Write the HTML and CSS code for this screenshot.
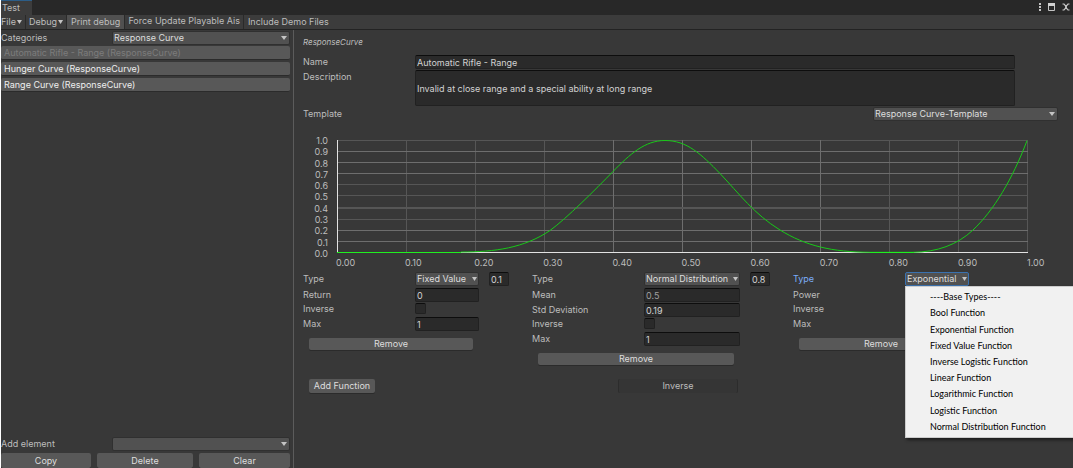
FILE: index.html
```html
<!DOCTYPE html>
<html lang="en">
<head>
<meta charset="utf-8">
<title>Test</title>
<link rel="stylesheet" href="styles.css">
</head>
<body>
<div class="app">
  <header class="titlebar">
    <div class="tab">Test</div>
    <div class="window-actions">
      <button class="icon-button" aria-label="Menu"><svg width="4" height="8" viewBox="0 0 4 8"><path d="M1 0h2v2H1zM1 3h2v2H1zM1 6h2v2H1z" fill="#c4c4c4"/></svg></button>
      <button class="icon-button" aria-label="Maximize"><svg width="8" height="8" viewBox="0 0 8 8"><path d="M.5 .5h6v7h-6z" fill="none" stroke="#c4c4c4"/><path d="M0 0h7v3H0z" fill="#d0d0d0"/></svg></button>
      <button class="icon-button" aria-label="Close"><svg width="8" height="8" viewBox="0 0 8 8"><path d="M.5 1h1.500L4 3.300 6 1h1.500M.5 7h1.500L4 4.700 6 7h1.500M3 4h2" fill="none" stroke="#c8c8c8" stroke-width="1.200"/></svg></button>
    </div>
  </header>
  <nav class="toolbar">
    <button class="tool tool-first">File<span class="caret"></span></button>
    <button class="tool">Debug<span class="caret"></span></button>
    <button class="tool tool-active">Print debug</button>
    <button class="tool tool-raised">Force Update Playable Ais</button>
    <button class="tool">Include Demo Files</button>
  </nav>
  <div class="body">
    <aside class="sidebar">
      <div class="side-row">
        <label for="categories">Categories</label>
        <span class="dropdown"><select id="categories"><option>Response Curve</option></select></span>
      </div>
      <div class="list">
        <button class="item" disabled>Automatic Rifle - Range (ResponseCurve)</button>
        <button class="item">Hunger Curve (ResponseCurve)</button>
        <button class="item">Range Curve (ResponseCurve)</button>
      </div>
      <div class="side-row side-add">
        <label for="add-element">Add element</label>
        <span class="dropdown"><select id="add-element"><option></option></select></span>
      </div>
      <div class="side-actions">
        <button class="button">Copy</button>
        <button class="button">Delete</button>
        <button class="button">Clear</button>
      </div>
    </aside>
    <main class="main">
      <p class="kind">ResponseCurve</p>
      <div class="form">
        <label for="name">Name</label>
        <input class="text" id="name" type="text" value="Automatic Rifle - Range">
        <label for="description">Description</label>
        <textarea class="text area" id="description">Invalid at close range and a special ability at long range</textarea>
      </div>
      <div class="template">
        <label for="template">Template</label>
        <span class="dropdown"><select id="template"><option>Response Curve-Template</option></select></span>
      </div>
      <div class="chart">
        <div class="y-axis"><span>1.0</span><span>0.9</span><span>0.8</span><span>0.7</span><span>0.6</span><span>0.5</span><span>0.4</span><span>0.3</span><span>0.2</span><span>0.1</span><span>0.0</span></div>
        <svg class="plot" viewBox="0 0 691 113" preserveAspectRatio="none">
          <g class="grid-dim">
            <path d="M0 .5H691M0 44.500H691M0 55.500H691M0 79.500H691"/>
            <path d="M69.500 0V112M138.500 0V112M207.500 0V112M552.500 0V112M621.500 0V112M690.500 0V112"/>
          </g>
          <g class="grid-bright">
            <path d="M0 11.500H691M0 22.500H691M0 33.500H691M0 90.500H691M0 101.500H691"/>
            <path d="M276.500 0V112M345.500 0V112M414.500 0V112M483.500 0V112"/>
          </g>
          <path class="grid-thick" d="M0 68H691"/>
          <path class="axis" d="M.5 0V112.500H691"/>
          <path class="curve" d="M124 112C158 112 187 108 213 90.500C230 78 258 50 276 31.500C293 14 308 .5 328 .5C350 .5 364 14 383 33.500C402 53.500 417 74 443 90C469 106 495 112 533 112.300H576C600 112 620 105 636 90C657 70 675 40 690 .7"/>
          <path class="curve-floor" d="M0 112.500H124M533 112.500H577"/>
        </svg>
        <div class="x-axis"><span>0.00</span><span>0.10</span><span>0.20</span><span>0.30</span><span>0.40</span><span>0.50</span><span>0.60</span><span>0.70</span><span>0.80</span><span>0.90</span><span>1.00</span></div>
      </div>
      <div class="functions">
        <section class="fn">
          <div class="row row-type"><label for="t1">Type</label><span class="dropdown"><select id="t1"><option>Fixed Value</option></select></span><input class="text weight" aria-label="Weight" value="0.1"></div>
          <div class="row"><label for="r1">Return</label><input class="text" id="r1" value="0"></div>
          <div class="row row-check"><label for="i1">Inverse</label><input class="check" type="checkbox" id="i1"></div>
          <div class="row"><label for="m1">Max</label><input class="text" id="m1" value="1"></div>
          <button class="button remove">Remove</button>
        </section>
        <section class="fn fn-wide">
          <div class="row row-type"><label for="t2">Type</label><span class="dropdown"><select id="t2"><option>Normal Distribution</option></select></span><input class="text weight" aria-label="Weight" value="0.8"></div>
          <div class="row"><label for="mean">Mean</label><input class="text muted" id="mean" value="0.5"></div>
          <div class="row"><label for="std">Std Deviation</label><input class="text" id="std" value="0.19"></div>
          <div class="row row-check"><label for="i2">Inverse</label><input class="check" type="checkbox" id="i2"></div>
          <div class="row"><label for="m2">Max</label><input class="text" id="m2" value="1"></div>
          <button class="button remove">Remove</button>
        </section>
        <section class="fn">
          <div class="row row-type"><label class="focused" for="t3">Type</label><span class="dropdown dropdown-open"><select id="t3"><option>Exponential</option></select>
            <span class="menu" role="menu">
              <button role="menuitem">----Base Types----</button>
              <button role="menuitem">Bool Function</button>
              <button role="menuitem">Exponential Function</button>
              <button role="menuitem">Fixed Value Function</button>
              <button role="menuitem">Inverse Logistic Function</button>
              <button role="menuitem">Linear Function</button>
              <button role="menuitem">Logarithmic Function</button>
              <button role="menuitem">Logistic Function</button>
              <button role="menuitem">Normal Distribution Function</button>
            </span></span></div>
          <div class="row"><label>Power</label></div>
          <div class="row row-check"><label>Inverse</label></div>
          <div class="row"><label>Max</label></div>
          <button class="button remove">Remove</button>
        </section>
      </div>
      <div class="footer-actions">
        <button class="button add">Add Function</button>
        <button class="button inverse">Inverse</button>
      </div>
    </main>
  </div>
</div>
</body>
</html>
```
FILE: styles.css
```css
* { box-sizing: border-box; }

body {
  margin: 0;
  padding-left: 1px;
  background: #fff;
  color: #bdbdbd;
  font: 9px/12px Inter, "Liberation Sans", sans-serif;
}

button, input, select, textarea {
  margin: 0;
  padding: 0;
  border: 0;
  border-radius: 0;
  outline: 0;
  background: none;
  color: inherit;
  font: inherit;
}

.app {
  display: flex;
  flex-direction: column;
  min-height: 100vh;
  overflow: hidden;
  background: #383838;
}

.titlebar {
  display: flex;
  justify-content: space-between;
  height: 15px;
  background: #282828;
}
.tab {
  width: 31px;
  padding: 1px 1px 0;
  border-top: 1px solid #2c5d87;
  background: #3c3c3c;
}
.window-actions { display: flex; gap: 6px; padding: 3px 3px 0 0; }
.icon-button { display: flex; height: 8px; }

.toolbar {
  display: flex;
  height: 15px;
  border-bottom: 1px solid #232323;
  background: #3c3c3c;
}
.tool {
  display: flex;
  align-items: center;
  gap: 1px;
  padding: 0 3px;
  border-right: 1px solid #2a2a2a;
  white-space: nowrap;
}
.tool-first { padding-left: 0; }
.tool-active { padding: 0 4px; background: #505050; }
.tool-raised { padding-bottom: 2px; }
.tool:last-child { padding-left: 4px; border-right: 0; }
.caret { width: 5px; height: 4px; background: #c4c4c4; clip-path: polygon(0 0, 100% 0, 50% 100%); }

.body { display: flex; flex: 1; }

.sidebar {
  display: flex;
  flex-direction: column;
  width: 293px;
  padding: 1px 3px 0 0;
  border-right: 1px solid #5c5c5c;
}
.side-row { display: grid; grid-template-columns: 111px 1fr; align-items: center; }
.side-add { margin-top: auto; }

.dropdown { position: relative; display: block; }
.dropdown::after {
  content: "";
  position: absolute;
  top: 5px;
  right: 3px;
  width: 6px;
  height: 4px;
  background: #c4c4c4;
  clip-path: polygon(0 0, 100% 0, 50% 100%);
  pointer-events: none;
}
select {
  display: block;
  width: 100%;
  height: 14px;
  padding: 0 0 0 1px;
  border: 1px solid #303030;
  border-radius: 2px;
  background: #515151;
  color: #dedede;
  appearance: none;
}

.list { display: flex; flex-direction: column; gap: 2px; margin-top: 1px; }
.item {
  height: 14px;
  padding: 0 3px;
  border-bottom: 1px solid #2b2b2b;
  border-radius: 2px;
  background: #585858;
  color: #eee;
  text-align: left;
}
.item:disabled { color: #7c7c7c; }

.side-actions { display: grid; grid-template-columns: 90px 1fr 91px; gap: 6px; margin-top: 2px; }
.button {
  height: 12px;
  border-radius: 2px;
  background: #585858;
  box-shadow: 0 1px #2b2b2b;
  color: #dedede;
}
.side-actions .button { height: 15px; }

.main { flex: 1; min-width: 0; padding: 6px 15px 0 9px; }
.kind { margin: 0; font-size: 8px; font-style: italic; }

.form {
  display: grid;
  grid-template-columns: 112px 1fr;
  row-gap: 1px;
  margin: 7px 43px 0 0;
}
.form label { padding-top: 1px; }
.text {
  width: 100%;
  height: 14px;
  padding: 0 1px;
  border: 1px solid #212121;
  border-top-color: #0d0d0d;
  border-radius: 2px;
  background: #2a2a2a;
  color: #d2d2d2;
}
.area { display: block; height: 36px; padding: 12px 1px 0; resize: none; }

.template { display: grid; grid-template-columns: 1fr 185px; align-items: center; margin-top: 1px; }

.chart {
  display: grid;
  grid-template-columns: 25px 1fr;
  column-gap: 9px;
  margin: 19px 30px 0 0;
}
.plot { display: block; width: 100%; height: 113px; }
.plot path { fill: none; vector-effect: non-scaling-stroke; }
.grid-dim path { stroke: #565656; }
.grid-bright path { stroke: #6e6e6e; }
.plot .grid-thick { stroke: #565656; stroke-width: 2; }
.plot .axis { stroke: #e2e2e2; }
.plot .curve { stroke: #18c818; }
.plot .curve-floor { stroke: #20f020; }
.y-axis {
  display: flex;
  flex-direction: column;
  justify-content: space-between;
  height: 124px;
  margin: -5px 0 -6px;
  line-height: 11px;
  text-align: right;
}
.x-axis {
  grid-column: 2;
  display: grid;
  grid-template-columns: repeat(10, 1fr) 0;
  margin: 4px 1px 0 -1px;
}

.functions { display: grid; grid-template-columns: 229px 261px 1fr; margin-top: 3px; }
.row {
  display: grid;
  grid-template-columns: 112px 64px 21px;
  align-items: center;
  height: 14px;
  margin-bottom: 1px;
}
.fn-wide .row { grid-template-columns: 112px 96px 19px; }
.row-type { margin-bottom: 2px; }
.row-check { align-items: start; height: 12px; margin-bottom: 2px; line-height: 11px; }
.row .dropdown::after { right: 2px; width: 5px; }
.weight { margin-left: 10px; width: 20px; }
.muted { color: #a0a0a0; }
.check {
  width: 11px;
  height: 11px;
  border: 1px solid #212121;
  border-top-color: #0d0d0d;
  border-radius: 2px;
  background: #2a2a2a;
  appearance: none;
}
.remove { display: block; width: 164px; margin: 7px 0 0 6px; }
.fn-wide .remove { width: 196px; }

.focused { color: #7baefa; }
.dropdown-open select { border-color: #3a72b0; }
.menu {
  position: absolute;
  top: 14px;
  left: 0;
  z-index: 1;
  display: grid;
  grid-auto-rows: 1fr;
  width: 170px;
  height: 152px;
  padding: 2px 0 2px 24px;
  border: 1px solid #ccc;
  background: #f1f1f1;
  box-shadow: 2px 2px 3px #1c1c1c;
  color: #000;
  font: 9px/12px Lato, "Noto Sans", sans-serif;
}
.menu button { text-align: left; white-space: nowrap; }

.footer-actions {
  display: grid;
  grid-template-columns: 66px 120px;
  column-gap: 243px;
  margin: 14px 0 0 6px;
}
.footer-actions .button { height: 14px; }
.footer-actions .inverse {
  border: solid #2c2c2c;
  border-width: 0 1px;
  background: #353535;
  box-shadow: none;
  color: #bdbdbd;
}
```
